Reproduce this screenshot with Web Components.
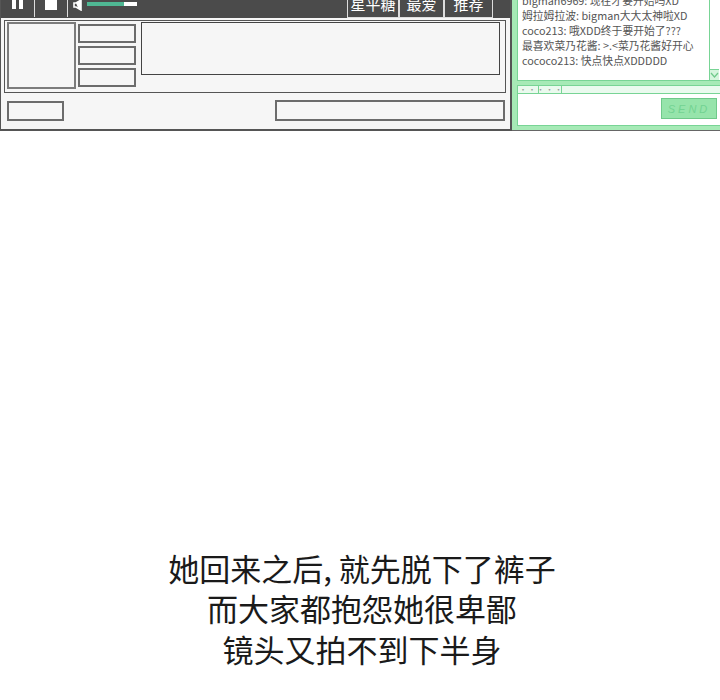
<!DOCTYPE html>
<html lang="zh">
<head>
<meta charset="utf-8">
<title>panel</title>
<style>
  html, body { margin: 0; background: #fff; }
  body { font-family: "Noto Sans CJK SC", "Noto Sans", sans-serif; height: 700px; overflow: hidden; }
</style>
</head>
<body>
<comic-page>
  <stream-window>
    <player-panel slot="player">
      <player-tab style="--w: 52px">星平糖</player-tab>
      <player-tab style="--w: 45px">最爱</player-tab>
      <player-tab style="--w: 49px">推荐</player-tab>
    </player-panel>
    <chat-panel slot="chat">
      <p>bigman6969: 现在才要开始吗XD</p>
      <p>姆拉姆拉波: bigman大大太神啦XD</p>
      <p>coco213: 哦XDD终于要开始了???</p>
      <p>最喜欢菜乃花酱: &gt;.&lt;菜乃花酱好开心</p>
      <p>cococo213: 快点快点XDDDDD</p>
    </chat-panel>
  </stream-window>
  <panel-caption>
    <span>她回来之后, 就先脱下了裤子</span>
    <span>而大家都抱怨她很卑鄙</span>
    <span>镜头又拍不到下半身</span>
  </panel-caption>
</comic-page>

<script>
// page wrapper
class ComicPage extends HTMLElement {
  constructor() {
    super();
    this.attachShadow({ mode: 'open' });
    this.shadowRoot.innerHTML = /* html */ `
      <style>
        :host { display: flex; flex-direction: column; width: 720px; height: 700px; }
      </style>
      <slot></slot>
    `;
  }
}

// top strip: player on the left, chat on the right
class StreamWindow extends HTMLElement {
  constructor() {
    super();
    this.attachShadow({ mode: 'open' });
    this.shadowRoot.innerHTML = /* html */ `
      <style>
        :host { display: grid; grid-template-columns: 512px 208px; height: 131px; }
      </style>
      <slot name="player"></slot>
      <slot name="chat"></slot>
    `;
  }
}

class PlayerTab extends HTMLElement {
  constructor() {
    super();
    this.attachShadow({ mode: 'open' });
    this.shadowRoot.innerHTML = /* html */ `
      <style>
        :host {
          display: flex; align-items: flex-end; justify-content: center;
          box-sizing: border-box; width: var(--w); height: 26px; padding-bottom: 3px;
          border: 1px solid #ddd; border-top: 0;
          color: #fff; font-size: 15px; line-height: 20px;
        }
      </style>
      <slot></slot>
    `;
  }
}

class PlayerPanel extends HTMLElement {
  constructor() {
    super();
    this.attachShadow({ mode: 'open' });
    this.shadowRoot.innerHTML = /* html */ `
      <style>
        :host {
          display: flex; flex-direction: column; box-sizing: border-box; height: 131px;
          background: #f6f6f6; border: solid #555; border-width: 0 2px 2px 1px;
        }
        .bar {
          display: flex; align-items: flex-end; height: 18px; flex: none; overflow: hidden;
          background: #4b4b4b; padding-right: 17px; box-sizing: border-box;
        }
        .cell { display: flex; height: 17px; align-self: flex-start; box-sizing: border-box; border-right: 1px solid #ddd; }
        .pause { width: 34px; gap: 3px; padding-left: 11px; }
        .pause i { width: 4px; height: 9px; background: #fff; }
        .stop { width: 33px; justify-content: center; }
        .stop i { width: 12px; height: 10px; background: #fff; }
        .volume { display: flex; align-items: flex-start; gap: 4px; padding-left: 5px; align-self: flex-start; }
        .slider { display: flex; width: 50px; height: 4px; margin-top: 2px; background: #fff; }
        .slider i { width: 37px; background: #4fb793; }
        .tabs { display: flex; margin-left: auto; align-self: flex-end; height: 17px; align-items: flex-end; }
        .body { flex: 1; display: flex; flex-direction: column; padding: 2px 3px 0 3px; }
        .frame {
          display: grid; grid-template-columns: 69px 58px 362px; column-gap: 2px;
          height: 73px; box-sizing: border-box; padding: 1px 5px 0 2px;
          border: 1px solid #555; margin-right: 1px;
        }
        .box { box-sizing: border-box; border: 2px solid #6c6c6c; }
        .thumb { height: 67px; border-color: #7c7c7c; }
        .stack { display: flex; flex-direction: column; gap: 3px; padding-top: 2px; }
        .stack .box { height: 19px; }
        .main { height: 53px; margin-left: 3px; border-width: 1px; border-color: #444; }
        .lower { display: flex; justify-content: space-between; padding: 8px 2px 0 3px; }
        .name { width: 57px; height: 20px; }
        .info { width: 230px; height: 21px; margin-top: -1px; }
      </style>
      <div class="bar">
        <div class="cell pause"><i></i><i></i></div>
        <div class="cell stop"><i></i></div>
        <div class="volume">
          <svg width="10" height="11" viewBox="0 0 10 11"><path d="M1 3 H3 L8 0 V10 L3 7 H1 Z" fill="none" stroke="#fff" stroke-width="1.6"/><path d="M3 3 L8 0 V10 L5 8 Z" fill="#fff"/></svg>
          <div class="slider"><i></i></div>
        </div>
        <div class="tabs"><slot></slot></div>
      </div>
      <div class="body">
        <div class="frame">
          <div class="box thumb"></div>
          <div class="stack"><div class="box"></div><div class="box"></div><div class="box"></div></div>
          <div class="box main"></div>
        </div>
        <div class="lower">
          <div class="box name"></div>
          <div class="box info"></div>
        </div>
      </div>
    `;
  }
}

class ChatPanel extends HTMLElement {
  constructor() {
    super();
    this.attachShadow({ mode: 'open' });
    this.shadowRoot.innerHTML = /* html */ `
      <style>
        :host {
          display: flex; flex-direction: column; box-sizing: border-box; height: 131px;
          background: #a6eab6; padding-left: 5px; border-bottom: 1px solid #666;
        }
        .top { display: flex; height: 81px; flex: none; border-bottom: 1px solid #78d495; box-sizing: border-box; border-left: 1px solid #78d495; }
        .log {
          flex: 1; display: flex; flex-direction: column; justify-content: flex-end;
          background: #fff; padding: 0 0 12px 4px; overflow: hidden;
          color: #555; font-size: 10.8px; line-height: 15px;
        }
        ::slotted(p) { margin: 0; white-space: nowrap; }
        .scroll { width: 10px; display: flex; flex-direction: column; justify-content: flex-end; background: #fff; border-left: 1px solid #78d495; }
        .scroll svg { display: block; background: #d5f5dd; border-top: 1px solid #78d495; }
        .tabs { display: flex; height: 7px; flex: none; margin-top: 4px; border-bottom: 1px solid #78d495; background: #eafaee; border-top: 1px solid #78d495; }
        .tabs span {
          display: flex; justify-content: center; align-items: center; height: 7px; box-sizing: border-box;
          border-right: 1px solid #78d495; border-left: 1px solid #78d495; margin-right: -1px;
          color: #9a9a9a; font-size: 8px; line-height: 7px; letter-spacing: 1px;
        }
        .tabs span:nth-child(1) { width: 22px; }
        .tabs span:nth-child(2) { width: 24px; }
        .input {
          display: flex; justify-content: flex-end; align-items: flex-start;
          height: 32px; flex: none; box-sizing: border-box; padding: 4px 3px 0 0;
          background: #fff; border-left: 1px solid #78d495; border-bottom: 1px solid #78d495;
        }
        .send {
          width: 56px; height: 21px; box-sizing: border-box; display: flex; align-items: center; justify-content: center;
          background: #96e4ab; border: 1px solid #6fc98a; color: #72d392;
          font-family: "Liberation Sans", sans-serif; font-size: 11px; font-style: italic; letter-spacing: 3px;
        }
      </style>
      <div class="top">
        <div class="log"><slot></slot></div>
        <div class="scroll">
          <svg width="9" height="10" viewBox="0 0 9 10"><path d="M1 3 L4.5 7 L8 3" fill="none" stroke="#6fc98a" stroke-width="1.2"/></svg>
        </div>
      </div>
      <div class="tabs"><span>··</span><span>···</span></div>
      <div class="input"><div class="send">SEND</div></div>
    `;
  }
}

class PanelCaption extends HTMLElement {
  constructor() {
    super();
    this.attachShadow({ mode: 'open' });
    this.shadowRoot.innerHTML = /* html */ `
      <style>
        :host {
          display: flex; flex-direction: column; align-items: center;
          margin-top: 417px; padding-left: 4px; color: #1a1a1a; font-size: 31px; line-height: 40.4px;
          white-space: nowrap;
        }
      </style>
      <slot></slot>
    `;
  }
}

customElements.define('comic-page', ComicPage);
customElements.define('stream-window', StreamWindow);
customElements.define('player-tab', PlayerTab);
customElements.define('player-panel', PlayerPanel);
customElements.define('chat-panel', ChatPanel);
customElements.define('panel-caption', PanelCaption);
</script>
</body>
</html>
